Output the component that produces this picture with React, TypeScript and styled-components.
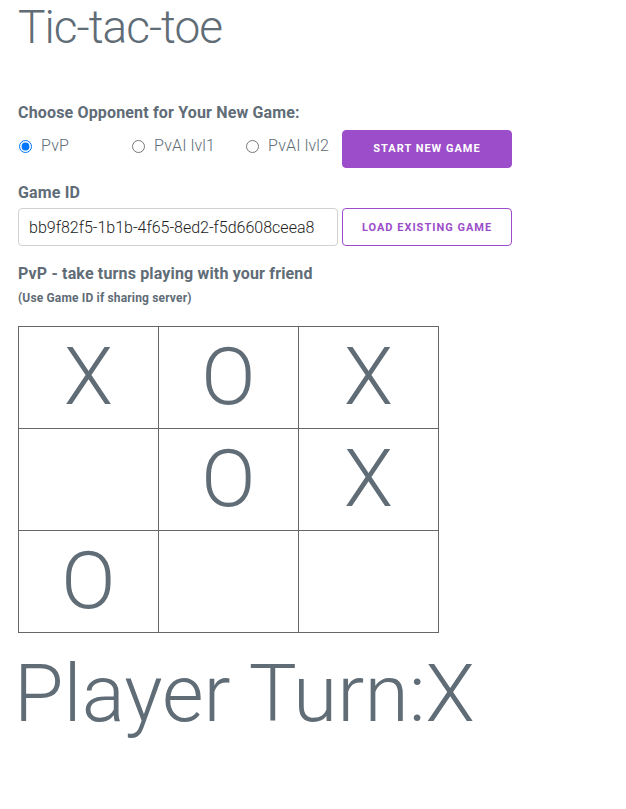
import React from "react";
import styled, { createGlobalStyle } from "styled-components";

const Global = createGlobalStyle`
  html, body { margin: 0; padding: 0; background: #fff; }
  body {
    font-family: Roboto, "Helvetica Neue", Arial, sans-serif;
    font-size: 16px;
    font-weight: 300;
    letter-spacing: 0.01em;
    line-height: 1.6;
    color: #606c76;
  }
  * { box-sizing: border-box; }
`;

const Page = styled.div`
  padding: 0 18px;
`;

const Title = styled.h1`
  font-size: 46px;
  font-weight: 300;
  line-height: 1.2;
  letter-spacing: -1px;
  margin: 0 0 45px 0;
`;

const Label = styled.label<{ $mb: number }>`
  display: block;
  font-weight: 700;
  font-size: 16px;
  line-height: 1.6;
  margin: 0 0 ${(p) => p.$mb}px 0;
`;

const Row = styled.div<{ $mb: number }>`
  display: flex;
  align-items: center;
  margin-bottom: ${(p) => p.$mb}px;
`;

const Option = styled.label<{ $w: number }>`
  display: flex;
  align-items: center;
  width: ${(p) => p.$w}px;
  font-size: 16px;
  font-weight: 300;
  margin-bottom: 5px;
`;

const Radio = styled.input`
  width: 13px;
  height: 13px;
  margin: 0 9px 0 1px;
  accent-color: #0075ff;
`;

const Button = styled.button<{ $outline?: boolean }>`
  height: 38px;
  width: 170px;
  padding: 0;
  border-radius: 4px;
  border: 1px solid #9b4dca;
  background: ${(p) => (p.$outline ? "transparent" : "#9b4dca")};
  color: ${(p) => (p.$outline ? "#9b4dca" : "#fff")};
  font-family: Roboto, Arial, sans-serif;
  font-size: 11px;
  font-weight: 700;
  letter-spacing: 1px;
  text-transform: uppercase;
  cursor: pointer;
`;

const TextInput = styled.input`
  width: 320px;
  height: 38px;
  padding: 6px 10px;
  margin-right: 4px;
  border: 1px solid #d1d1d1;
  border-radius: 4px;
  font-family: Roboto, Arial, sans-serif;
  font-size: 16px;
  font-weight: 300;
  color: #222;
  background: transparent;
`;

const Heading = styled.div`
  font-weight: 700;
  font-size: 16px;
  line-height: 1.4;
`;

const Small = styled.div`
  font-weight: 700;
  font-size: 12px;
  line-height: 1.4;
  margin: 4px 0 19px;
`;

const Board = styled.div`
  display: grid;
  grid-template-columns: repeat(3, 139px);
  grid-auto-rows: 101px;
  gap: 1px;
  background: #666;
  border: 1px solid #666;
  width: max-content;
`;

const Cell = styled.div`
  background: #fff;
  display: flex;
  align-items: center;
  justify-content: center;
  font-size: 80px;
  font-weight: 300;
  line-height: 1;
  color: #606c76;
`;

const Turn = styled.div`
  font-size: 80.5px;
  font-weight: 300;
  line-height: 1.2;
  letter-spacing: 0;
  margin: 13px 0 0 -4px;
`;

const cells = ["X", "O", "X", "", "O", "X", "O", "", ""];

export default function App() {
  return (
    <Page>
      <Global />
      <Title>Tic-tac-toe</Title>
      <Label $mb={4}>Choose Opponent for Your New Game:</Label>
      <Row $mb={12}>
        <Option $w={113}>
          <Radio type="radio" name="opp" defaultChecked />
          PvP
        </Option>
        <Option $w={114}>
          <Radio type="radio" name="opp" />
          PvAI lvl1
        </Option>
        <Option $w={97}>
          <Radio type="radio" name="opp" />
          PvAI lvl2
        </Option>
        <Button>Start new game</Button>
      </Row>
      <Label $mb={3}>Game ID</Label>
      <Row $mb={17}>
        <TextInput defaultValue="bb9f82f5-1b1b-4f65-8ed2-f5d6608ceea8" />
        <Button $outline>Load existing game</Button>
      </Row>
      <Heading>PvP - take turns playing with your friend</Heading>
      <Small>(Use Game ID if sharing server)</Small>
      <Board>
        {cells.map((c, i) => (
          <Cell key={i}>{c}</Cell>
        ))}
      </Board>
      <Turn>Player Turn:X</Turn>
    </Page>
  );
}
